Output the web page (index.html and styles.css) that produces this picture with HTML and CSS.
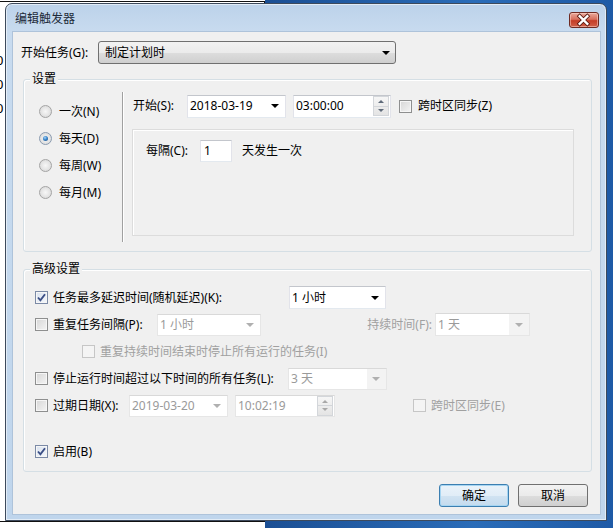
FILE: index.html
```html
<!DOCTYPE html>
<html lang="zh-CN">
<head>
<meta charset="utf-8">
<title>编辑触发器</title>
<link rel="stylesheet" href="styles.css">
</head>
<body>
<div class="backwin">
  <div class="backtext"><span>0</span><span>0</span><span>0</span></div>
</div>
<div class="desk"></div>
<div class="dialog">
  <div class="titlebar">
    <span class="title">编辑触发器</span>
    <div class="close">
      <svg width="30" height="16" viewBox="0 0 30 16">
        <path d="M11 4 L19 12 M19 4 L11 12" stroke="#5a1a12" stroke-width="4.2" stroke-linecap="square"/>
        <path d="M11 4 L19 12 M19 4 L11 12" stroke="#ffffff" stroke-width="2.4" stroke-linecap="square"/>
      </svg>
    </div>
  </div>
  <div class="client">
    <div class="row-begin">
      <span class="lbl-begin">开始任务(G):</span>
      <div class="ddl"><span>制定计划时</span><i class="arrow"></i></div>
    </div>

    <div class="group g-settings">
      <span class="legend">设置</span>
      <div class="radios">
        <div class="radio"><i class="rb"></i><span>一次(N)</span></div>
        <div class="radio"><i class="rb on"></i><span>每天(D)</span></div>
        <div class="radio"><i class="rb"></i><span>每周(W)</span></div>
        <div class="radio"><i class="rb"></i><span>每月(M)</span></div>
      </div>
      <div class="vsep"></div>
      <div class="sched">
        <div class="start-row">
          <span class="lbl-start">开始(S):</span>
          <div class="combo w-date"><span class="val">2018-03-19</span><i class="arrow"></i></div>
          <div class="combo w-time"><span class="val">03:00:00</span><i class="spin"><b class="up"></b><b class="dn"></b></i></div>
          <div class="check cz"><i class="cb"></i><span>跨时区同步(Z)</span></div>
        </div>
        <div class="recur">
          <span class="lbl-every">每隔(C):</span>
          <div class="edit">1</div>
          <span>天发生一次</span>
        </div>
      </div>
    </div>

    <div class="group g-adv">
      <span class="legend">高级设置</span>
      <div class="arow">
        <div class="check w1"><i class="cb on"><svg width="11" height="11" viewBox="0 0 11 11"><path d="M2 5.5 L4.4 8.3 L9 2.2" fill="none" stroke="#3c4f86" stroke-width="1.9"/></svg></i><span>任务最多延迟时间(随机延迟)(K):</span></div>
        <div class="combo w-delay"><span class="val">1 小时</span><i class="arrow"></i></div>
      </div>
      <div class="arow">
        <div class="check w2"><i class="cb"></i><span>重复任务间隔(P):</span></div>
        <div class="combo dis w-rep"><span class="val">1 小时</span><i class="arrow"></i></div>
        <span class="lbl-dur">持续时间(F):</span>
        <div class="combo dis w-dur"><span class="val">1 天</span><i class="arrow"></i></div>
      </div>
      <div class="arow indent">
        <div class="check dis"><i class="cb"></i><span>重复持续时间结束时停止所有运行的任务(I)</span></div>
      </div>
      <div class="arow">
        <div class="check w4"><i class="cb"></i><span>停止运行时间超过以下时间的所有任务(L):</span></div>
        <div class="combo dis w-stop"><span class="val">3 天</span><i class="arrow"></i></div>
      </div>
      <div class="arow">
        <div class="check w5"><i class="cb"></i><span>过期日期(X):</span></div>
        <div class="combo dis w-exp"><span class="val">2019-03-20</span><i class="arrow"></i></div>
        <div class="combo dis w-exptime"><span class="val">10:02:19</span><i class="spin"><b class="up"></b><b class="dn"></b></i></div>
        <div class="check dis ce"><i class="cb"></i><span>跨时区同步(E)</span></div>
      </div>
      <div class="arow enable">
        <div class="check"><i class="cb on"><svg width="11" height="11" viewBox="0 0 11 11"><path d="M2 5.5 L4.4 8.3 L9 2.2" fill="none" stroke="#3c4f86" stroke-width="1.9"/></svg></i><span>启用(B)</span></div>
      </div>
    </div>

    <div class="buttons">
      <div class="btn default">确定</div>
      <div class="btn">取消</div>
    </div>
  </div>
</div>
</body>
</html>
```

FILE: styles.css
```css
* { box-sizing: border-box; }

body {
  margin: 0;
  width: 613px;
  height: 528px;
  overflow: hidden;
  position: relative;
  background: #ffffff;
  font-family: "Noto Sans", "Noto Sans CJK SC", sans-serif;
  font-size: 12px;
  line-height: 16px;
  color: #000;
}

.backwin {
  position: absolute;
  left: -20px;
  top: 1px;
  width: 285px;
  height: 521px;
  border: 1px solid #111;
  background: #fff;
}
.backtext {
  position: absolute;
  left: 15px;
  top: 50px;
  display: flex;
  flex-direction: column;
  gap: 8px;
  font-size: 13px;
}

.desk {
  position: absolute;
  left: 265px;
  top: 0;
  right: 0;
  bottom: 0;
  background: linear-gradient(90deg, #1b4f94, #2a6cb8 60%, #1e5aa6);
}

.dialog {
  position: absolute;
  left: 5px;
  top: 3px;
  width: 602px;
  height: 518px;
  border: 1px solid #3d4a5c;
  border-radius: 7px 7px 0 0;
  background: linear-gradient(180deg, #bcd2ea 0, #c8dbef 28px, #bfd5ec 100%);
  box-shadow: inset 0 0 0 1px rgba(255,255,255,0.55);
  padding: 0 6px 6px 7px;
  display: flex;
  flex-direction: column;
}

.titlebar {
  height: 28px;
  display: flex;
  justify-content: space-between;
  align-items: flex-start;
  padding-left: 2px;
}
.title {
  margin-top: 7px;
  color: #1e2b3a;
}
.close {
  margin-top: 8px;
  margin-right: 1px;
  width: 30px;
  height: 16px;
  border: 1px solid #6e2a22;
  border-radius: 3px;
  background: linear-gradient(180deg, #e9a99b 0%, #d7705e 45%, #c43c26 55%, #d0604a 100%);
  box-shadow: inset 0 0 0 1px rgba(255,220,210,0.5);
  display: flex;
  align-items: center;
  justify-content: center;
  overflow: hidden;
}
.close svg { display: block; margin-left: -1px; }

.client {
  flex: 1;
  background: #f0f0f0;
  box-shadow: 0 0 0 1px #aec3da;
  display: flex;
  flex-direction: column;
}

/* top row */
.row-begin {
  margin-top: 9px;
  height: 23px;
  display: flex;
  align-items: center;
  padding-left: 8px;
}
.lbl-begin { width: 77px; }
.ddl {
  width: 298px;
  height: 23px;
  border: 1px solid #707070;
  border-radius: 3px;
  background: linear-gradient(180deg, #f2f2f2 0%, #ebebeb 50%, #dddddd 51%, #cfcfcf 100%);
  display: flex;
  align-items: center;
  justify-content: space-between;
  padding: 0 5px 0 6px;
}

.arrow {
  display: block;
  width: 0;
  height: 0;
  border-left: 4px solid transparent;
  border-right: 4px solid transparent;
  border-top: 4px solid #000;
}

/* group boxes */
.group {
  position: relative;
  margin-left: 10px;
  margin-right: 8px;
  border: 1px solid #d5dfe5;
  border-radius: 3px;
  box-shadow: inset 1px 1px 0 #fff;
}
.legend {
  position: absolute;
  left: 6px;
  top: -9px;
  padding: 0 2px;
  background: #f0f0f0;
  line-height: 16px;
}

.g-settings {
  margin-top: 15px;
  height: 173px;
  display: flex;
}
.radios {
  width: 98px;
  padding-top: 18px;
  padding-left: 15px;
  display: flex;
  flex-direction: column;
}
.radio {
  height: 27px;
  display: flex;
  align-items: center;
  gap: 7px;
}
.rb {
  display: block;
  width: 13px;
  height: 13px;
  border-radius: 50%;
  border: 1px solid #a4a4a4;
  background: radial-gradient(circle at 50% 50%, #f7f7f7 0, #e6e6e6 50%, #d2d2d2 100%);
  position: relative;
}
.rb.on {
  border-color: #8a9bb0;
}
.rb.on::after {
  content: "";
  position: absolute;
  left: 3px;
  top: 3px;
  width: 5px;
  height: 5px;
  border-radius: 50%;
  background: radial-gradient(circle at 40% 35%, #a9d6f7 0, #3a86cc 45%, #17457a 100%);
}

.vsep {
  margin-top: 12px;
  width: 2px;
  height: 150px;
  border-left: 1px solid #a0a0a0;
  border-right: 1px solid #ffffff;
}
.sched {
  flex: 1;
  padding-left: 9px;
  padding-top: 14px;
}
.start-row {
  height: 24px;
  display: flex;
  align-items: center;
}
.lbl-start { width: 54px; }

.combo {
  height: 23px;
  background: #fff;
  border: 1px solid;
  border-color: #c3c6cc #e2e3ea #e3e9ef #e2e3ea;
  display: flex;
  align-items: center;
  justify-content: space-between;
  padding-left: 2px;
  padding-right: 6px;
}
.combo .val { white-space: nowrap; }
.combo.dis { color: #9a9a9a; border-color: #d9d9d9 #e6e6e6 #e6e6e6 #e6e6e6; }
.combo.dis .arrow { border-top-color: #b0b0b0; }
.w-date { width: 99px; }
.w-time { width: 98px; margin-left: 7px; padding-right: 1px; }
.spin {
  display: flex;
  flex-direction: column;
  width: 16px;
  height: 20px;
  border: 1px solid #d3d6da;
  background: linear-gradient(180deg, #f6f6f6, #e4e4e4);
}
.spin b {
  flex: 1;
  position: relative;
}
.spin .up { border-bottom: 1px solid #d3d6da; }
.spin b::after {
  content: "";
  position: absolute;
  left: 4px;
  top: 3px;
  border-left: 3px solid transparent;
  border-right: 3px solid transparent;
}
.spin .up::after { border-bottom: 3px solid #5f6b7a; }
.spin .dn::after { border-top: 3px solid #5f6b7a; top: 2px; }
.dis .spin .up::after { border-bottom-color: #a8a8a8; }
.dis .spin .dn::after { border-top-color: #a8a8a8; }

.check {
  display: flex;
  align-items: center;
  gap: 6px;
}
.cb {
  display: flex;
  align-items: center;
  justify-content: center;
  width: 13px;
  height: 13px;
  border: 1px solid #8e8f8f;
  background: linear-gradient(135deg, #d6d6d6 0%, #f4f4f4 100%);
  box-shadow: inset 0 0 0 1px #f6f6f6;
}
.cb.on {
  border-color: #7b8aa6;
  background: linear-gradient(135deg, #d9e2ef 0%, #f6f8fb 100%);
}
.check.dis { color: #a0a0a0; }
.check.dis .cb { border-color: #c6c6c6; background: #f4f4f4; box-shadow: none; }
.cz { margin-left: 8px; }

.recur {
  margin-top: 11px;
  margin-left: -1px;
  width: 442px;
  height: 107px;
  border: 1px solid #dcdcdc;
  box-shadow: inset 1px 1px 0 #fff;
  display: flex;
  align-items: flex-start;
  padding-left: 13px;
  padding-top: 10px;
}
.recur > span { line-height: 22px; }
.lbl-every { width: 54px; }
.edit {
  width: 32px;
  height: 22px;
  margin-right: 10px;
  background: #fff;
  border: 1px solid;
  border-color: #c3c6cc #e2e3ea #e3e9ef #e2e3ea;
  padding-left: 3px;
  line-height: 20px;
}

/* advanced */
.g-adv {
  margin-top: 17px;
  height: 203px;
  padding-top: 14px;
  padding-left: 11px;
}
.arow {
  height: 27px;
  display: flex;
  align-items: center;
}
.arow .check { gap: 5px; }
.w1 { width: 254px; }
.w2 { width: 122px; }
.w4 { width: 253px; }
.w5 { width: 94px; }
.w-delay { width: 97px; }
.w-rep { width: 104px; height: 22px; }
.lbl-dur {
  width: 174px;
  text-align: right;
  padding-right: 3px;
  color: #a0a0a0;
}
.w-dur { width: 95px; background: linear-gradient(90deg, #fff 78%, #f3f3f3 78%); }
.w-stop { width: 99px; height: 22px; background: linear-gradient(90deg, #fff 80%, #f3f3f3 80%); }
.w-exp { width: 99px; height: 22px; }
.w-exptime { width: 100px; height: 22px; margin-left: 7px; padding-right: 1px; }
.indent { padding-left: 47px; }
.ce { margin-left: 78px; }
.enable { margin-top: 19px; }

/* buttons */
.buttons {
  margin-top: 12px;
  display: flex;
  justify-content: flex-end;
  gap: 9px;
  padding-right: 12px;
}
.btn {
  width: 70px;
  height: 23px;
  border: 1px solid #707070;
  border-radius: 3px;
  background: linear-gradient(180deg, #f2f2f2 0%, #ebebeb 50%, #dddddd 51%, #cfcfcf 100%);
  display: flex;
  align-items: center;
  justify-content: center;
}
.btn.default {
  border-color: #3c7fb1;
  box-shadow: inset 0 0 0 1px #a6d5f2;
  background: linear-gradient(180deg, #eaf3fa 0%, #e1edf7 50%, #d1e3f2 51%, #c4dbee 100%);
}
```
